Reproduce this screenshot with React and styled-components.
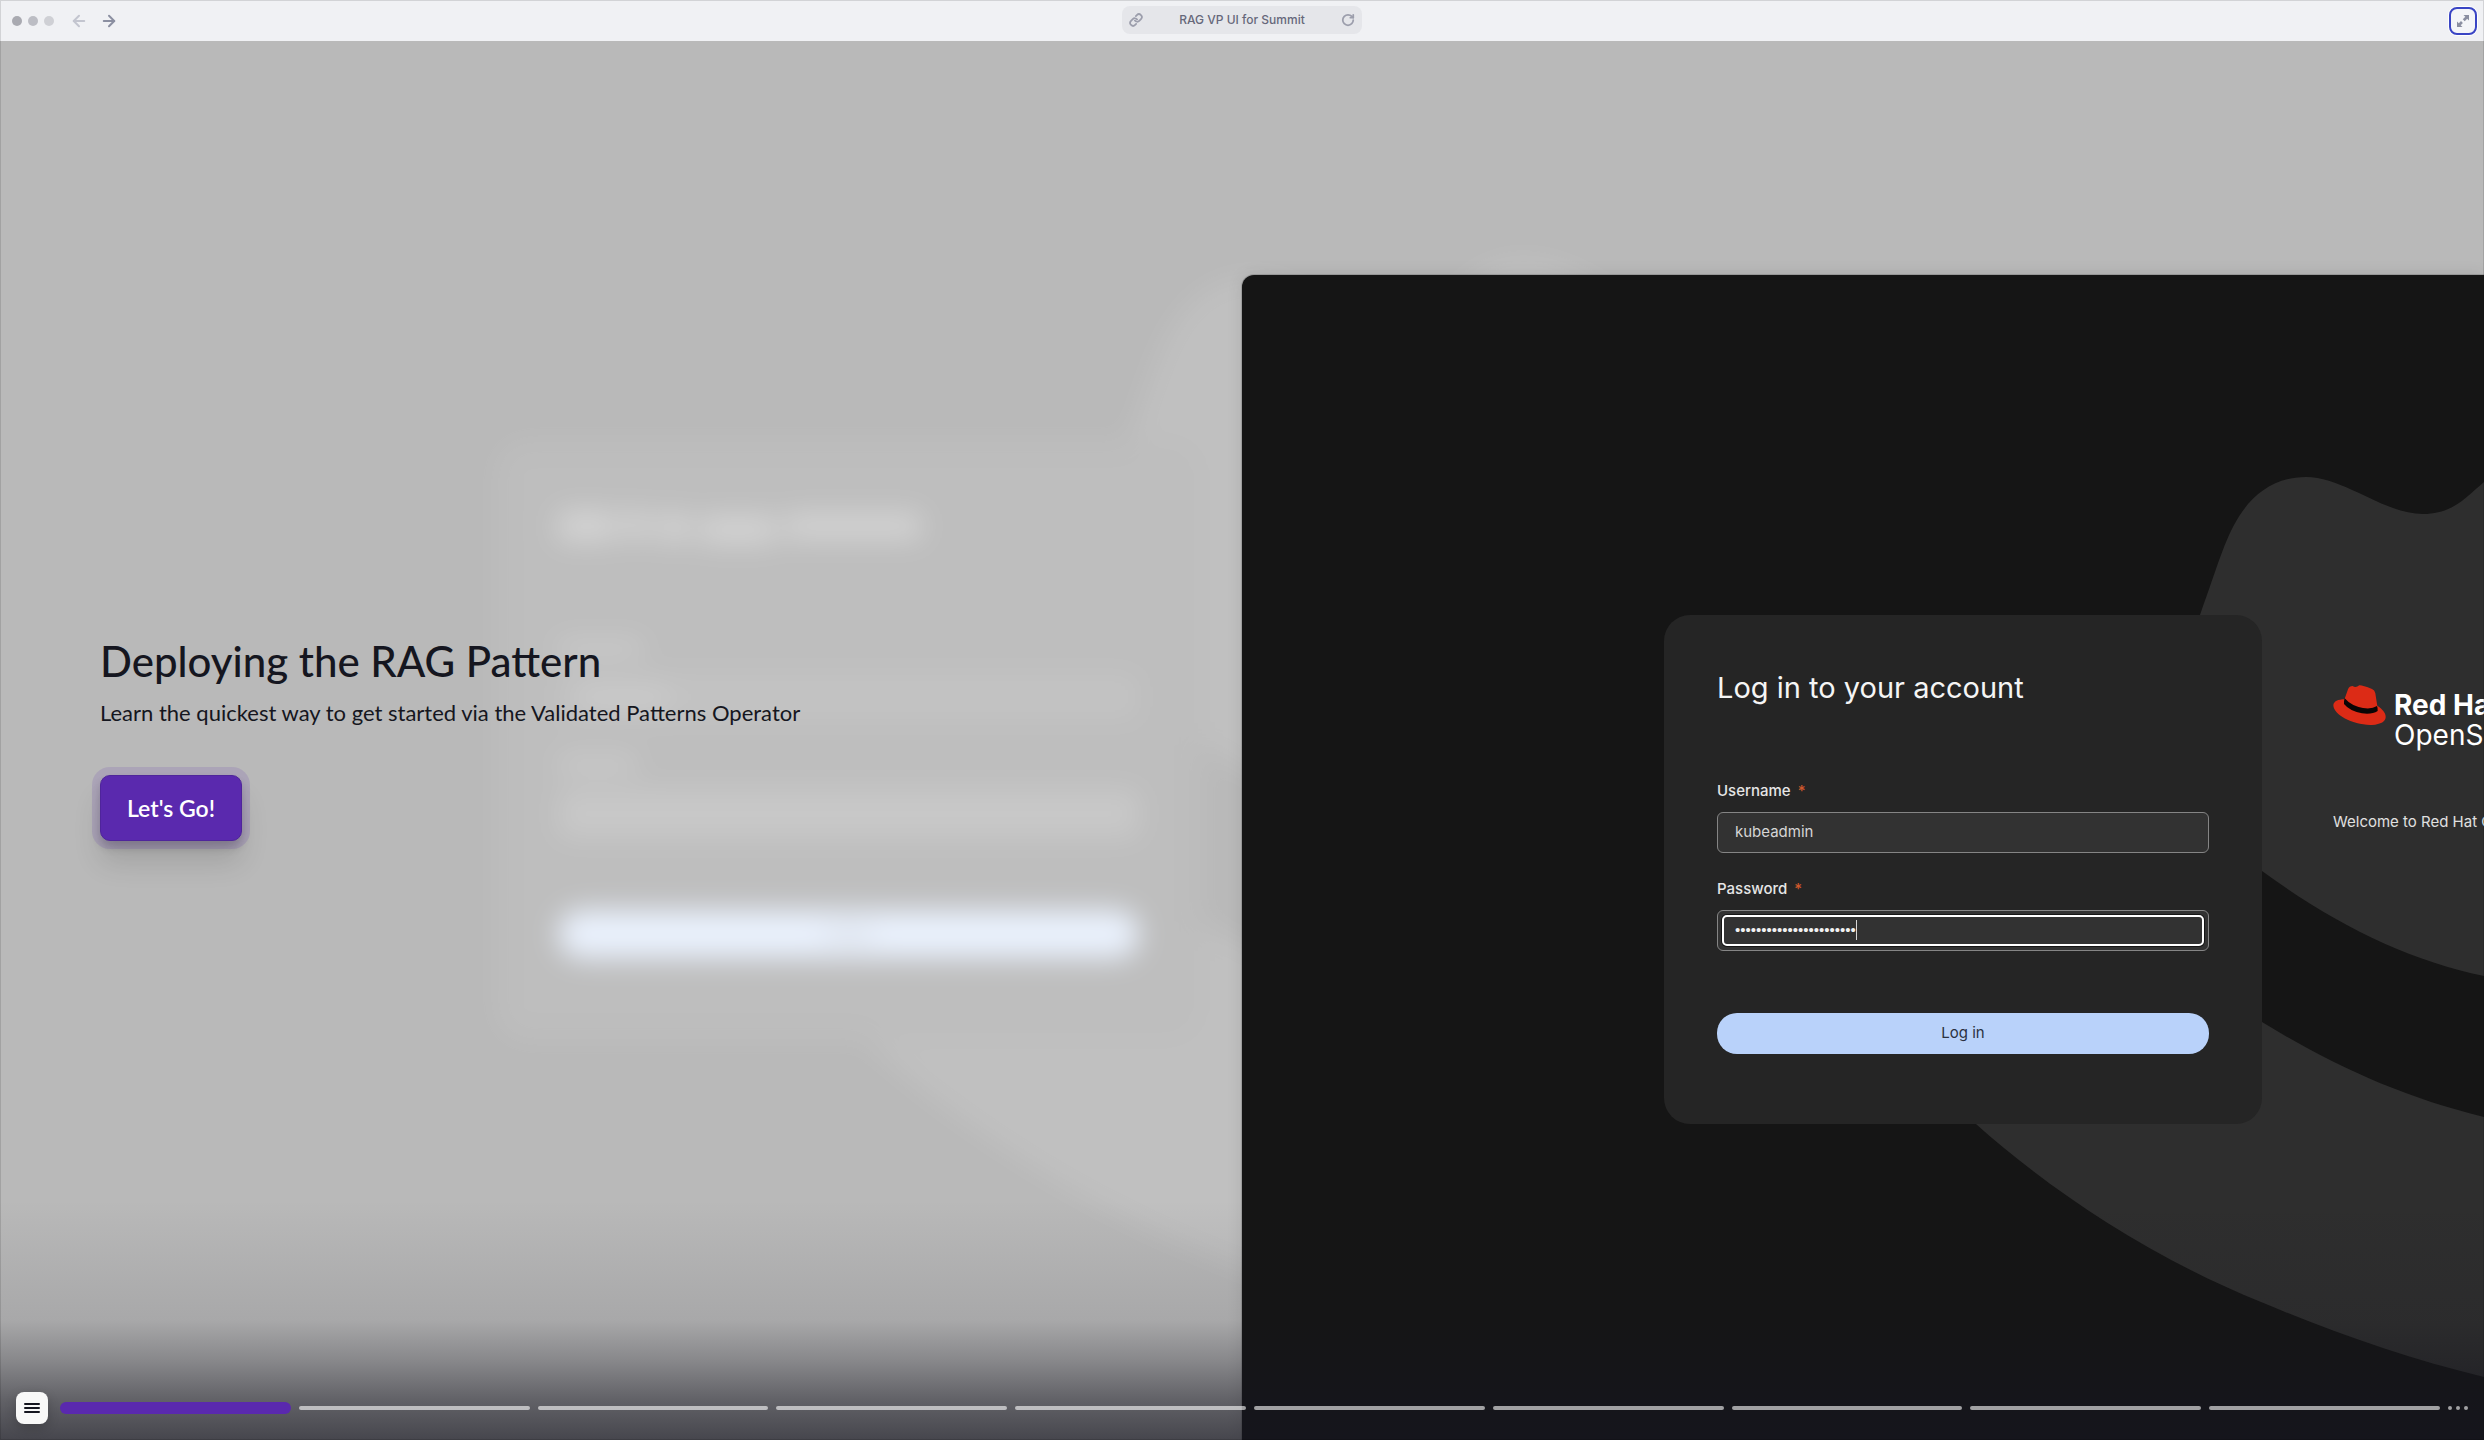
import { useState } from 'react'
import styled, { createGlobalStyle } from 'styled-components'
import { ArrowLeft, ArrowRight, Link, RotateCw } from 'lucide-react'

const GlobalStyle = createGlobalStyle`
  *, *::before, *::after {
    box-sizing: border-box;
  }
  body {
    margin: 0;
    font-family: Inter, "Liberation Sans", sans-serif;
  }
  button, input {
    font-family: inherit;
  }
  h1, h2, p, ol {
    margin: 0;
    padding: 0;
  }
`

const Window = styled.div`
  position: relative;
  display: flex;
  flex-direction: column;
  min-height: 100vh;
  overflow: hidden;

  &::after {
    content: "";
    position: absolute;
    inset: 0;
    border: 1px solid rgba(0, 0, 0, 0.12);
    pointer-events: none;
  }
`

/* ---------- browser bar ---------- */

const TopBar = styled.header`
  display: grid;
  grid-template-columns: 1fr 240px 1fr;
  align-items: center;
  height: 41px;
  padding: 1px 7px 0;
  background: #f0f1f4;
`

const BarSide = styled.div`
  display: flex;
  align-items: center;
  justify-content: ${(props) => (props.$end ? 'flex-end' : 'flex-start')};
`

const Lights = styled.div`
  display: flex;
  gap: 6px;
  margin: 0 10px 0 5px;
`

const Light = styled.span`
  width: 10px;
  height: 10px;
  border-radius: 50%;
  background: ${(props) => props.$color};
`

const IconButton = styled.button`
  display: flex;
  align-items: center;
  justify-content: center;
  width: 30px;
  height: 28px;
  padding: 0;
  border: 0;
  background: none;
  color: ${(props) => (props.disabled ? '#c3c5cf' : '#8b8fa1')};
`

const AddressBar = styled.div`
  display: flex;
  align-items: center;
  justify-content: space-between;
  height: 28px;
  margin-bottom: 2px;
  border-radius: 8px;
  background: #e5e6ea;
  color: #9c9eac;
  font-size: 12px;
  line-height: 16px;
`

const AddressLink = styled.span`
  display: flex;
  justify-content: center;
  width: 28px;
`

const AddressText = styled.span`
  color: #66687a;
  font-weight: 500;
`

const ReloadButton = styled(IconButton)`
  width: 28px;
  color: #9c9eac;
`

const ExpandButton = styled(IconButton)`
  width: 28px;
  border: 2px solid #3a45c4;
  border-radius: 8px;
  box-shadow: 0 0 0 1px #fff;
  background: #f4f5f8;
`

/* ---------- stage ---------- */

const Stage = styled.main`
  position: relative;
  flex: 1;
  display: grid;
  grid-template-columns: 1fr 1fr;
  overflow: hidden;
`

const Backdrop = styled.div`
  position: absolute;
  inset: 0;
  overflow: hidden;
  background: #151515;

  svg {
    display: block;
    width: 100%;
    height: 100%;
    filter: blur(14px);
  }

  &::after {
    content: "";
    position: absolute;
    inset: 0;
    background: rgba(255, 255, 255, 0.7);
  }
`

const BottomFade = styled.div`
  position: absolute;
  inset: auto 0 0;
  height: 240px;
  background: linear-gradient(
    rgba(21, 21, 31, 0) 0%,
    rgba(21, 21, 31, 0.1) 50%,
    rgba(21, 21, 31, 0.3) 67%,
    rgba(21, 21, 31, 0.53) 83%,
    rgba(21, 21, 31, 0.7) 100%
  );
  pointer-events: none;
`

const Intro = styled.section`
  position: relative;
  display: flex;
  flex-direction: column;
  align-items: flex-start;
  justify-content: center;
  padding: 0 24px 4px 100px;
  color: #151620;
  font-family: Lato, "Liberation Sans", sans-serif;
`

const IntroTitle = styled.h1`
  font-size: 42px;
  line-height: 50px;
  font-weight: 500;
`

const IntroText = styled.p`
  margin-top: 8px;
  font-size: 22px;
  line-height: 38px;
`

const StartButton = styled.button`
  min-width: 142px;
  height: 66px;
  margin-top: 43px;
  padding: 0 24px;
  border: 1px solid #4f259b;
  border-radius: 10px;
  background: #5a29ae;
  color: #fff;
  font-size: 23px;
  font-weight: 600;
  box-shadow: 0 0 0 8px rgba(90, 41, 174, 0.14), 0 6px 10px rgba(0, 0, 0, 0.2),
    0 22px 28px rgba(0, 0, 0, 0.12);
`

/* ---------- login screen ---------- */

const Screen = styled.section`
  position: relative;
  display: flex;
  align-items: flex-start;
  gap: 71px;
  min-width: 0;
  margin-top: 234px;
  padding: 340px 0 0 422px;
  overflow: hidden;
  border-radius: 12px 0 0 0;
  background: #151515;
  box-shadow: 0 0 0 1px rgba(0, 0, 0, 0.14), 0 0 16px rgba(0, 0, 0, 0.1);
`

const Waves = styled.svg`
  position: absolute;
  top: 0;
  left: 0;
  width: 2105px;
  height: 1185px;
`

const Card = styled.form`
  position: relative;
  flex: none;
  width: 598px;
  padding: 53px 53px 70px;
  border-radius: 26px;
  background: #252525;
`

const CardTitle = styled.h2`
  margin-bottom: 72px;
  color: #f5f5f5;
  font-size: 29px;
  line-height: 40px;
  font-weight: 400;
`

const Field = styled.div`
  position: relative;
  display: flex;
  flex-direction: column;
  gap: 10px;
  margin-bottom: 25px;
`

const Label = styled.label`
  color: #e6e6e6;
  font-size: 15px;
  line-height: 22px;
  font-weight: 500;
`

const Required = styled.span`
  margin-left: 7px;
  color: #d0582c;
`

const TextInput = styled.input`
  width: 100%;
  height: 41px;
  padding: 0 17px 2px;
  border: 1px solid #858585;
  border-radius: 6px;
  outline: 0;
  background: #323232;
  color: #d6d6d6;
  font-size: 15px;
`

const PasswordInput = styled(TextInput)`
  color: #f0f0f0;
  font-family: "Liberation Sans", sans-serif;
`

const FocusRing = styled.span`
  position: absolute;
  inset: auto 5px 5px;
  height: 31px;
  border: 2px solid #fff;
  border-radius: 5px;
  box-shadow: 0 0 0 1px #151515;
  pointer-events: none;
`

const Caret = styled.span`
  position: absolute;
  bottom: 11px;
  left: 139px;
  width: 1px;
  height: 20px;
  background: #d6d6d6;
`

const LoginButton = styled.button`
  display: block;
  width: 100%;
  height: 41px;
  margin-top: 62px;
  padding: 0 0 2px;
  border: 0;
  border-radius: 20px;
  background: #b9d2fa;
  color: #2b3140;
  font-size: 15px;
`

const Brand = styled.div`
  position: relative;
  flex: none;
  padding-top: 70px;
  color: #fff;
  white-space: nowrap;
`

const Logo = styled.div`
  display: flex;
  gap: 8px;
  font-size: 28px;
  line-height: 30px;
`

const LogoText = styled.div`
  display: flex;
  flex-direction: column;
  padding-top: 5px;
`

const Welcome = styled.p`
  margin-top: 61px;
  color: #e0e0e0;
  font-size: 15px;
  line-height: 22px;
`

/* ---------- chapter bar ---------- */

const ChapterBar = styled.nav`
  position: absolute;
  inset: auto 16px 16px;
  display: flex;
  align-items: center;
  height: 32px;
`

const MenuButton = styled.button`
  display: flex;
  align-items: center;
  justify-content: center;
  width: 32px;
  height: 32px;
  margin-right: 12px;
  padding: 0;
  border: 0;
  border-radius: 8px;
  background: #f8f8f8;
  box-shadow: 0 4px 12px rgba(0, 0, 0, 0.2);
`

const Chapters = styled.ol`
  flex: 1;
  display: flex;
  align-items: center;
  gap: 8px;
  list-style: none;
`

const ChapterItem = styled.li`
  flex: 1;
  display: flex;
`

const Chapter = styled.button`
  flex: 1;
  height: ${(props) => (props.$current ? 12 : 4)}px;
  padding: 0;
  border: 0;
  border-radius: 6px;
  background: ${(props) => (props.$current ? '#5a29ae' : 'rgba(255, 255, 255, 0.6)')};
`

const MoreChapters = styled.div`
  display: flex;
  gap: 4px;
  margin-left: 8px;
`

const Dot = styled.span`
  width: 4px;
  height: 4px;
  border-radius: 50%;
  background: rgba(255, 255, 255, 0.6);
`

const chapters = Array.from({ length: 10 }, (_, i) => `Chapter ${i + 1}`)

const WavePaths = () => (
  <g fill="#2e2e2e">
    <path d="M940 380 L958 340 C978 284 984 260 1000 237 C1016 214 1038 202 1064 202 C1102 202 1142 239 1181 239 C1216 239 1228 216 1250 201 C1290 172 1340 190 1400 240 L2105 500 L2105 760 C1700 770 1440 740 1242 701 C1166 685 1094 650 1020 596 L940 520 Z" />
    <path d="M640 800 L734 849 C800 908 900 979 1019 1027 C1090 1057 1166 1084 1242 1102 C1500 1160 1800 1180 2105 1185 L2105 900 C1700 910 1440 885 1242 842 C1160 822 1090 790 1020 747 L900 660 Z" />
  </g>
)

const BlurredScreen = () => (
  <svg viewBox="2 2 2105 1185" preserveAspectRatio="xMinYMin slice" aria-hidden="true">
    <WavePaths />
    <rect x="422" y="340" width="598" height="509" rx="26" fill="#252525" />
    <g fill="#fff" opacity="0.34">
      <rect x="475" y="400" width="48" height="26" />
      <rect x="530" y="400" width="22" height="24" />
      <rect x="560" y="402" width="26" height="24" />
      <rect x="595" y="404" width="64" height="24" />
      <rect x="667" y="402" width="115" height="22" />
    </g>
    <g fill="#fff" opacity="0.24">
      <rect x="475" y="510" width="71" height="12" />
      <rect x="475" y="608" width="66" height="12" />
    </g>
    <rect x="475" y="537" width="492" height="41" rx="6" fill="#363636" />
    <rect x="493" y="552" width="74" height="12" fill="#606060" />
    <rect x="475" y="636" width="492" height="41" rx="6" fill="#484848" />
    <rect x="475" y="738" width="492" height="41" rx="20" fill="#b9d2fa" />
    <rect x="700" y="752" width="42" height="13" fill="#8fa2c2" />
  </svg>
)

const Hat = () => (
  <svg width="53" height="40" viewBox="145 135 159 120" aria-hidden="true">
    <path
      fill="#dc2b16"
      d="M180 178 C160 178 147 184 146 196 C147 225 205 256 262 255 C290 254 304 243 303 230 C303 218 293 207 278 197 Z"
    />
    <path
      fill="#dc2b16"
      d="M180 176 L190 148 Q194 138 204 138 Q213 145 224 136 Q232 135 262 147 Q270 150 272 160 L278 199 Q262 210 235 206 Q200 200 180 176 Z"
    />
    <path
      fill="#0a0505"
      d="M180 175 Q177 184 178 192 Q195 213 232 220 Q262 224 279 213 Q280 205 277 198 Q262 208 235 204 Q200 198 180 175 Z"
    />
  </svg>
)

const App = () => {
  const [current, setCurrent] = useState(0)
  const [username, setUsername] = useState('kubeadmin')
  const [password, setPassword] = useState('x'.repeat(23))

  return (
    <Window>
      <GlobalStyle />
      <TopBar>
        <BarSide>
          <Lights>
            <Light $color="#a9aab1" />
            <Light $color="#bcbdc4" />
            <Light $color="#cfd0d5" />
          </Lights>
          <IconButton aria-label="Back" disabled>
            <ArrowLeft size={18} strokeWidth={2.6} />
          </IconButton>
          <IconButton aria-label="Forward">
            <ArrowRight size={18} strokeWidth={2.6} />
          </IconButton>
        </BarSide>
        <AddressBar>
          <AddressLink>
            <Link size={14} strokeWidth={3} />
          </AddressLink>
          <AddressText>RAG VP UI for Summit</AddressText>
          <ReloadButton aria-label="Reload">
            <RotateCw size={14} strokeWidth={3} />
          </ReloadButton>
        </AddressBar>
        <BarSide $end>
          <ExpandButton aria-label="Full screen">
            <svg width="14" height="14" viewBox="0 0 14 14" fill="currentColor">
              <path d="M7.5 1H13V6.5L11.2 4.7 8.7 7.2 6.8 5.3 9.3 2.8Z" />
              <path d="M6.5 13H1V7.5L2.8 9.3 5 7.1 6.9 9 4.7 11.2Z" />
            </svg>
          </ExpandButton>
        </BarSide>
      </TopBar>

      <Stage>
        <Backdrop>
          <BlurredScreen />
        </Backdrop>

        <Intro>
          <IntroTitle>Deploying the RAG Pattern</IntroTitle>
          <IntroText>Learn the quickest way to get started via the Validated Patterns Operator</IntroText>
          <StartButton onClick={() => setCurrent(1)}>Let's Go!</StartButton>
        </Intro>

        <Screen>
          <Waves viewBox="0 0 2105 1185" aria-hidden="true">
            <WavePaths />
          </Waves>
          <Card onSubmit={(e) => e.preventDefault()}>
            <CardTitle>Log in to your account</CardTitle>
            <Field>
              <Label htmlFor="username">
                Username<Required>*</Required>
              </Label>
              <TextInput
                id="username"
                value={username}
                onChange={(e) => setUsername(e.target.value)}
              />
            </Field>
            <Field>
              <Label htmlFor="password">
                Password<Required>*</Required>
              </Label>
              <PasswordInput
                id="password"
                type="password"
                value={password}
                onChange={(e) => setPassword(e.target.value)}
              />
              <FocusRing />
              <Caret />
            </Field>
            <LoginButton type="submit">Log in</LoginButton>
          </Card>
          <Brand>
            <Logo>
              <Hat />
              <LogoText>
                <strong>Red Hat</strong>
                <span>OpenShift</span>
              </LogoText>
            </Logo>
            <Welcome>Welcome to Red Hat OpenShift</Welcome>
          </Brand>
        </Screen>

        <BottomFade />
        <ChapterBar aria-label="Chapters">
          <MenuButton aria-label="Menu">
            <svg width="16" height="12" viewBox="0 0 16 12" stroke="#151620" strokeWidth="2" strokeLinecap="round">
              <path d="M1 2H15M1 6H15M1 10H15" />
            </svg>
          </MenuButton>
          <Chapters>
            {chapters.map((name, i) => (
              <ChapterItem key={name}>
                <Chapter
                  aria-label={name}
                  $current={i === current}
                  onClick={() => setCurrent(i)}
                />
              </ChapterItem>
            ))}
          </Chapters>
          <MoreChapters>
            <Dot />
            <Dot />
            <Dot />
          </MoreChapters>
        </ChapterBar>
      </Stage>
    </Window>
  )
}

export default App
